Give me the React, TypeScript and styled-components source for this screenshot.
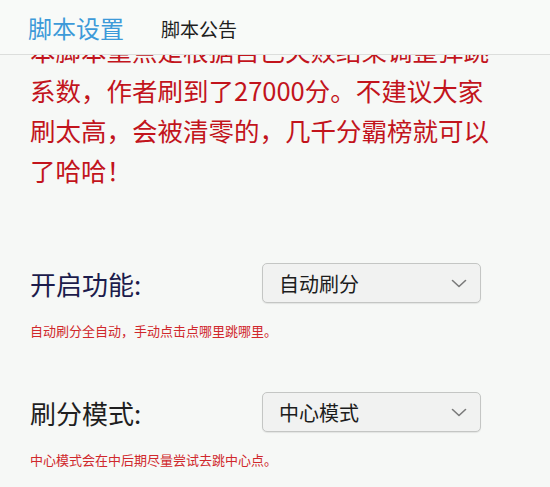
import React, { useState } from "react";
import styled, { createGlobalStyle } from "styled-components";

const GlobalStyle = createGlobalStyle`
  html, body {
    margin: 0;
    padding: 0;
    background: #f6f8f6;
    font-family: "Noto Sans CJK SC", "Noto Sans", sans-serif;
  }
`;

const Page = styled.div`
  width: 550px;
  height: 487px;
  display: flex;
  flex-direction: column;
  overflow: hidden;
  background: #f6f8f6;
`;

const TabBar = styled.div`
  height: 54px;
  flex-shrink: 0;
  display: flex;
  align-items: center;
  gap: 37px;
  padding-left: 28px;
  border-bottom: 1px solid #dcdedc;
  background: #f8faf8;
`;

const Tab = styled.div<{ active?: boolean }>`
  font-size: ${({ active }) => (active ? "24px" : "19px")};
  color: ${({ active }) => (active ? "#3d9ad9" : "#1e1e1e")};
  line-height: 1;
  margin-top: 2px;
  cursor: pointer;
`;

const Content = styled.div`
  flex: 1;
  overflow: hidden;
  padding: 0 50px 0 30px;
`;

const Notice = styled.p`
  margin: -25px 0 0 0;
  font-size: 25.5px;
  line-height: 40px;
  color: #c2141c;
`;

const Field = styled.div<{ first?: boolean }>`
  margin-top: ${({ first }) => (first ? "73px" : "52px")};
`;

const Row = styled.div`
  display: flex;
  align-items: center;
  height: 40px;
`;

const Label = styled.div<{ tint?: string }>`
  width: 232px;
  flex-shrink: 0;
  font-size: 26px;
  color: ${({ tint }) => tint || "#1f1f1f"};
`;

const SelectBox = styled.div`
  width: 219px;
  height: 40px;
  flex-shrink: 0;
  box-sizing: border-box;
  display: flex;
  align-items: center;
  justify-content: space-between;
  padding: 0 13px 0 16px;
  border: 1px solid #c4c6c4;
  border-radius: 5px;
  background: #f1f2f1;
  box-shadow: 0 1px 1px rgba(0, 0, 0, 0.08);
  font-size: 20px;
  color: #1c1c1c;
  cursor: pointer;
`;

const Hint = styled.div`
  margin-top: 19px;
  font-size: 13px;
  line-height: 18px;
  color: #d0282c;
  white-space: nowrap;
`;

function Chevron() {
  return (
    <svg width="16" height="9" viewBox="0 0 16 9">
      <path
        d="M1.5 1.5 L8 7.5 L14.5 1.5"
        fill="none"
        stroke="#7a7a7a"
        strokeWidth="1.6"
        strokeLinecap="round"
        strokeLinejoin="round"
      />
    </svg>
  );
}

interface SettingProps {
  label: string;
  value: string;
  hint: string;
  first?: boolean;
  tint?: string;
}

function Setting({ label, value, hint, first, tint }: SettingProps) {
  return (
    <Field first={first}>
      <Row>
        <Label tint={tint}>{label}</Label>
        <SelectBox>
          <span>{value}</span>
          <Chevron />
        </SelectBox>
      </Row>
      <Hint>{hint}</Hint>
    </Field>
  );
}

export default function App() {
  const [tab, setTab] = useState(0);

  return (
    <Page>
      <GlobalStyle />
      <TabBar>
        <Tab active={tab === 0} onClick={() => setTab(0)}>
          脚本设置
        </Tab>
        <Tab active={tab === 1} onClick={() => setTab(1)}>
          脚本公告
        </Tab>
      </TabBar>
      <Content>
        <Notice>
          本脚本重点是根据自己失败结果调整弹跳系数，作者刷到了27000分。不建议大家刷太高，会被清零的，几千分霸榜就可以了哈哈！
        </Notice>
        <Setting
          first
          tint="#1c1c4c"
          label="开启功能:"
          value="自动刷分"
          hint="自动刷分全自动，手动点击点哪里跳哪里。"
        />
        <Setting
          label="刷分模式:"
          value="中心模式"
          hint="中心模式会在中后期尽量尝试去跳中心点。"
        />
      </Content>
    </Page>
  );
}
